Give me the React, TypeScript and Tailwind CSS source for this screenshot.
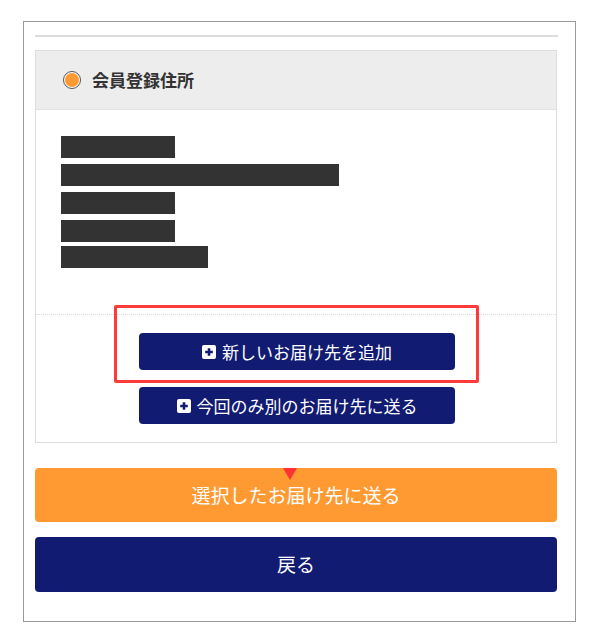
import React from "react";

const PlusIcon = () => (
  <svg width="14" height="14" viewBox="0 0 14 14" className="shrink-0">
    <rect x="0" y="0" width="14" height="14" rx="2" fill="#ffffff" />
    <path d="M7 3.2v7.6M3.2 7h7.6" stroke="#111b72" strokeWidth="2.6" />
  </svg>
);

const SubButton = ({ label }: { label: string }) => (
  <button className="flex h-[37px] w-[316px] items-center justify-center gap-[6px] rounded-[4px] bg-[#111b72] text-[17px] text-white">
    <PlusIcon />
    <span>{label}</span>
  </button>
);

const App = () => {
  const rows = [114, 278, 114, 114, 147];

  return (
    <div className="min-h-[634px] bg-white pt-[21px] pl-[23px] font-['Noto_Sans_CJK_JP','Noto_Sans',sans-serif]">
      <div className="relative h-[601px] w-[553px] border border-[#9a9a9a] pl-[11px] pt-[13px]">
        {/* Top divider */}
        <div className="h-[2px] w-[523px] bg-[#dcdcdc]" />

        {/* Address card */}
        <div className="mt-[13px] w-[522px] border border-[#dddddd]">
          <div className="flex h-[59px] items-center gap-[11px] border-b border-[#e2e2e2] bg-[#ededed] pl-[27px]">
            <span className="flex h-[18px] w-[18px] items-center justify-center rounded-full border border-[#555] bg-white">
              <span className="h-[14px] w-[14px] rounded-full bg-[#ff9a33]" />
            </span>
            <span className="text-[17px] font-bold text-[#333]">会員登録住所</span>
          </div>

          <div className="flex flex-col gap-[6px] pl-[25px] pt-[26px]">
            {rows.map((w, i) => (
              <div
                key={i}
                className={`h-[22px] bg-[#333333] ${i === 4 ? "-mt-[2px]" : ""}`}
                style={{ width: w }}
              />
            ))}
          </div>

          <div className="mt-[46px] border-t border-dotted border-[#dddddd]" />

          <div className="flex flex-col items-center gap-[17px] pb-[18px] pt-[18px] pl-[2px]">
            <SubButton label="新しいお届け先を追加" />
            <SubButton label="今回のみ別のお届け先に送る" />
          </div>
        </div>

        {/* Main actions */}
        <div className="mt-[25px] flex w-[522px] flex-col gap-[15px]">
          <button className="relative flex h-[54px] items-center justify-center rounded-[4px] bg-[#ff9a33] text-[19px] text-white">
            <span className="absolute left-[248px] top-0 h-0 w-0 border-l-[7px] border-r-[7px] border-t-[12px] border-l-transparent border-r-transparent border-t-[#ff3333]" />
            選択したお届け先に送る
          </button>
          <button className="flex h-[55px] items-center justify-center rounded-[4px] bg-[#111b72] text-[19px] text-white">
            戻る
          </button>
        </div>

        {/* Annotation highlight */}
        <div className="absolute left-[90px] top-[283px] h-[78px] w-[365px] rounded-[2px] border-[3px] border-[#ff3a3a]" />
      </div>
    </div>
  );
};

export default App;
